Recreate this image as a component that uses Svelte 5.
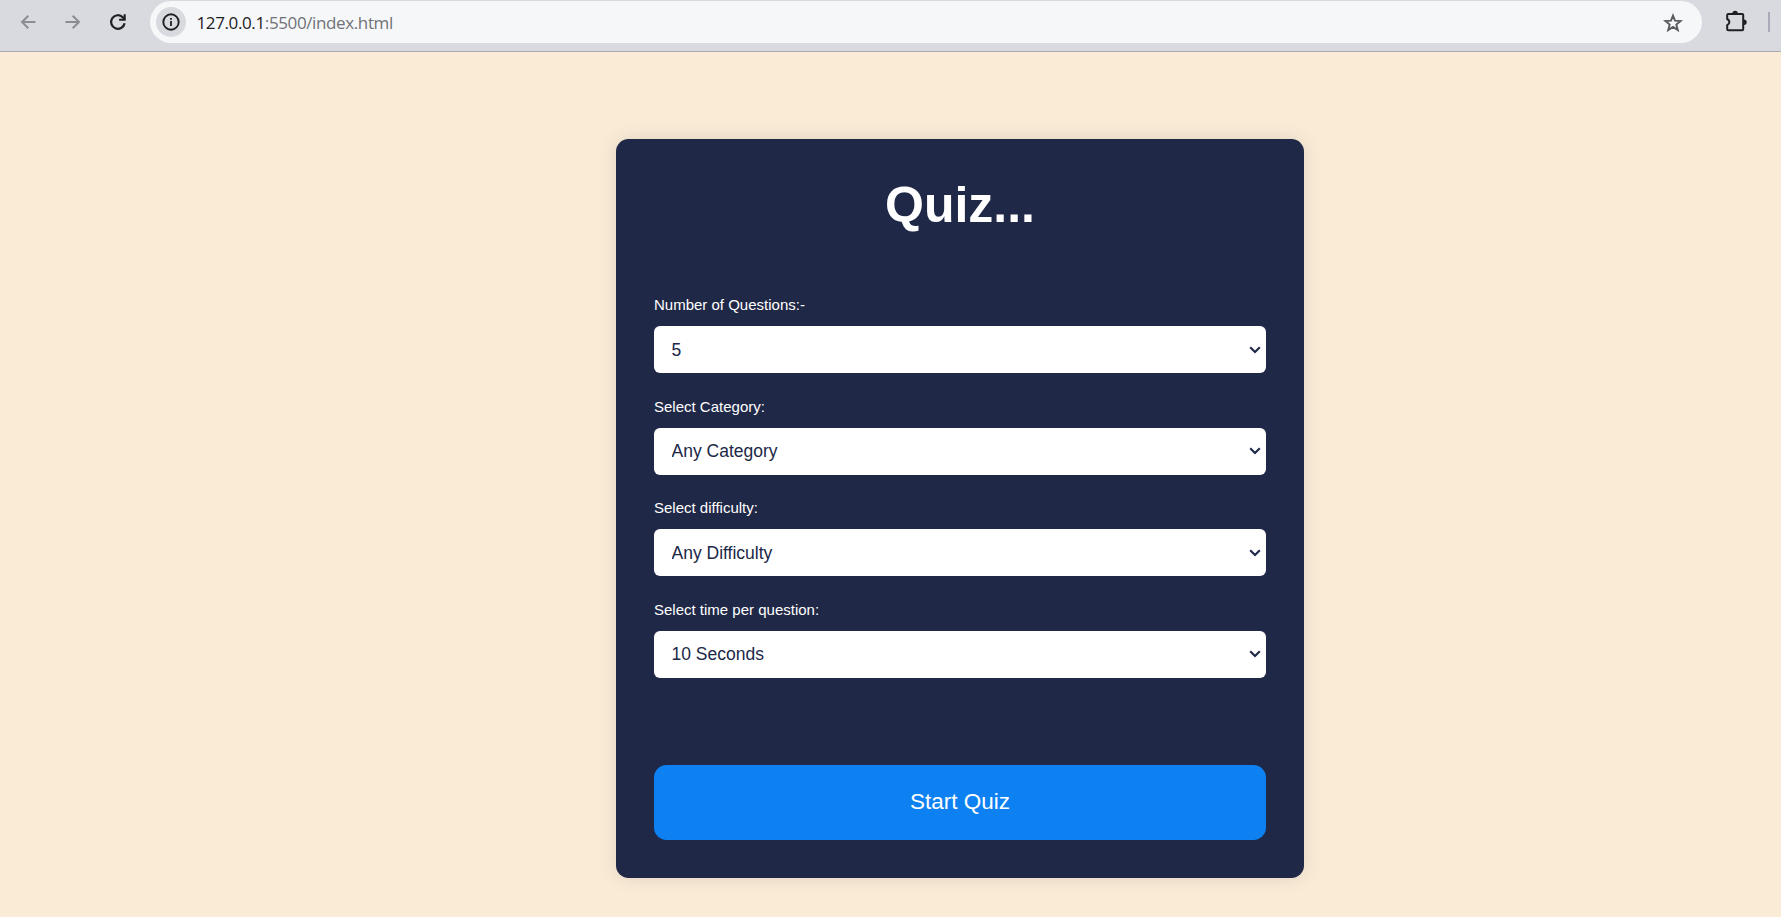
<script>
  const fields = [
    { id: 'questions', label: 'Number of Questions:-', value: '5' },
    { id: 'category', label: 'Select Category:', value: 'Any Category' },
    { id: 'difficulty', label: 'Select difficulty:', value: 'Any Difficulty' },
    { id: 'time', label: 'Select time per question:', value: '10 Seconds' }
  ];
</script>

<div class="window">
  <header class="toolbar">
    <svg class="nav" viewBox="0 0 20 20"><path d="M17.5 10H3.5M10.3 3.7 4 10l6.3 6.3" fill="none" stroke="#8b8d92" stroke-width="2" /></svg>
    <svg class="nav" viewBox="0 0 20 20"><path d="M2.5 10h14M9.7 3.7 16 10l-6.3 6.3" fill="none" stroke="#8b8d92" stroke-width="2" /></svg>
    <svg class="nav" viewBox="0 0 20 20"><path d="M16.6 11.2A6.8 6.8 0 1 1 14.9 5.4L17 7.5" fill="none" stroke="#1f2023" stroke-width="2.2" /><path d="M17.7 2.2v6.6h-6.6V6.7h4.5V2.2z" fill="#1f2023" /></svg>
    <div class="address">
      <span class="info">
        <svg viewBox="0 0 18 18"><circle cx="9" cy="9" r="7.7" fill="none" stroke="#1f2023" stroke-width="1.9" /><path d="M8.1 8h1.8v5H8.1zM8.1 5h1.8v1.8H8.1z" fill="#1f2023" /></svg>
      </span>
      <span class="url"><b>127.0.0.1</b>:5500/index.html</span>
      <svg class="star" viewBox="0 0 20 20"><path d="M10 2.6l2 5.1 5.6.3-4.3 3.5 1.5 5.6-4.8-3.1-4.8 3.1 1.5-5.6L2.4 8l5.6-.3z" fill="none" stroke="#5a5b5f" stroke-width="1.9" /></svg>
    </div>
    <svg class="puzzle" viewBox="0 0 22 22"><path d="M3.2 4.1h14a1 1 0 0 1 1 1v14.2a1 1 0 0 1-1 1h-14a1 1 0 0 1-1-1v-4.1c2.9-1.3 2.9-4.9 0-6.2V5.1a1 1 0 0 1 1-1z" fill="none" stroke="#1f2023" stroke-width="2" /><path d="M7.4 3.5a2.7 2.7 0 0 1 5.4 0zM19 9.5a2.7 2.7 0 0 1 0 5.4z" fill="#1f2023" /></svg>
    <span class="divider"></span>
  </header>

  <main>
    <section class="card">
      <h1>Quiz...</h1>
      <div class="fields">
        {#each fields as field}
          <div class="field">
            <label for={field.id}>{field.label}</label>
            <div class="control">
              <select id={field.id}><option>{field.value}</option></select>
              <svg class="chevron" viewBox="0 0 12 8"><path d="M1.2 1.2 6 6l4.8-4.8" fill="none" stroke="#202847" stroke-width="2.1" /></svg>
            </div>
          </div>
        {/each}
      </div>
      <button>Start Quiz</button>
    </section>
  </main>
</div>

<style>
  :global(body) { margin: 0; overflow: hidden; }
  .window {
    height: 917px;
    display: flex;
    flex-direction: column;
    background: #faebd7;
    font-family: "Liberation Sans", Arial, sans-serif;
  }
  .toolbar {
    box-sizing: border-box;
    height: 52px;
    flex: none;
    display: flex;
    align-items: flex-start;
    background: #d9dadf;
    border-bottom: 1px solid #aba9b2;
    padding: 1px 0 0 18px;
  }
  .nav { width: 20px; height: 20px; margin: 11px 25px 0 0; flex: none; }
  .address {
    box-sizing: border-box;
    width: 1552px;
    height: 42px;
    margin-left: -3px;
    border-radius: 21px;
    background: #f6f7f9;
    display: flex;
    align-items: center;
    padding: 0 19.5px 0 6px;
  }
  .info {
    width: 30px;
    height: 30px;
    border-radius: 50%;
    background: #d9dadf;
    display: flex;
    align-items: center;
    justify-content: center;
  }
  .info svg { width: 18px; height: 18px; }
  .url {
    margin: 1px 0 0 10.5px;
    font: 17px/24px "Open Sans", sans-serif;
    color: #707276;
    letter-spacing: -0.38px;
  }
  .url b { font-weight: 400; color: #1f2023; }
  .star { width: 20px; height: 20px; margin: 1px 0 0 auto; }
  .puzzle { width: 22px; height: 22px; margin: 9px 0 0 23px; flex: none; }
  .divider { width: 2px; height: 20px; margin: 11px 0 0 21px; background: #a9abb9; }
  main { flex: 1; display: flex; justify-content: center; padding: 87px 0 0 139px; align-items: flex-start; }
  .card {
    box-sizing: border-box;
    width: 688px;
    height: 739px;
    padding: 37.5px 38px 38px;
    border-radius: 12.5px;
    background: #202847;
    box-shadow: 0 0 19px rgba(0, 0, 0, 0.1);
    display: flex;
    flex-direction: column;
  }
  h1 { margin: 0; font-size: 50px; line-height: 57px; font-weight: 700; text-align: center; color: #fff; }
  .fields { margin-top: 62.5px; display: flex; flex-direction: column; gap: 23.5px; }
  .field { display: flex; flex-direction: column; height: 78px; }
  label { font-size: 15px; line-height: 18px; color: #fff; }
  .control { display: grid; margin-top: 12.25px; align-items: center; }
  select {
    grid-area: 1 / 1;
    appearance: none;
    box-sizing: border-box;
    width: 100%;
    height: 47px;
    border: 0;
    border-radius: 6px;
    padding: 0 17.5px;
    background: #fff;
    color: #202847;
    font: 17.5px "Liberation Sans", Arial, sans-serif;
  }
  .chevron { grid-area: 1 / 1; justify-self: end; width: 12px; height: 8px; margin-right: 5px; pointer-events: none; }
  button {
    height: 75px;
    margin-top: auto;
    border: 0;
    border-radius: 12.5px;
    padding: 0 0 1px;
    background: #0d81f1;
    color: #fff;
    font: 22.5px "Liberation Sans", Arial, sans-serif;
  }
</style>
